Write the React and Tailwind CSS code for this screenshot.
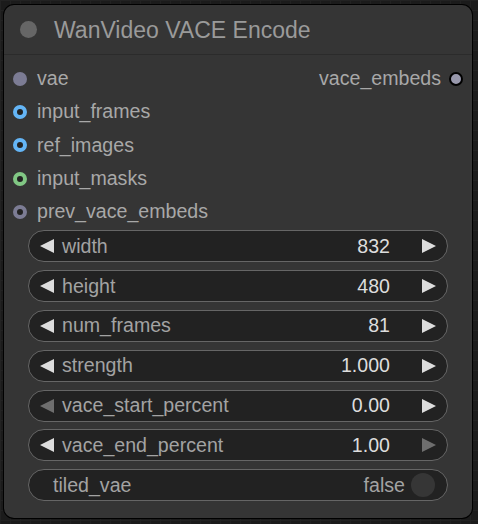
const inputs = [
  { name: "vae", kind: "fill", color: "#7c7c94" },
  { name: "input_frames", kind: "ring", color: "#64b5f6" },
  { name: "ref_images", kind: "ring", color: "#64b5f6" },
  { name: "input_masks", kind: "ring", color: "#81c784" },
  { name: "prev_vace_embeds", kind: "ring", color: "#7c7c94" },
];

const widgets = [
  { name: "width", value: "832" },
  { name: "height", value: "480" },
  { name: "num_frames", value: "81" },
  { name: "strength", value: "1.000" },
  { name: "vace_start_percent", value: "0.00", leftDim: true },
  { name: "vace_end_percent", value: "1.00", rightDim: true },
];

function Dot({ kind, color }) {
  if (kind === "fill") {
    return <span className="block w-[14px] h-[14px] rounded-full" style={{ background: color }} />;
  }
  return (
    <span
      className="block w-[14px] h-[14px] rounded-full border-[4px] bg-[#222]"
      style={{ borderColor: color }}
    />
  );
}

function Arrow({ dir, dim }) {
  const fill = dim ? "#6e6e6e" : "#dddddd";
  return (
    <svg width="16" height="16" viewBox="0 0 16 16" className="shrink-0">
      {dir === "left" ? (
        <polygon points="15,1 15,15 1,8" fill={fill} />
      ) : (
        <polygon points="1,1 1,15 15,8" fill={fill} />
      )}
    </svg>
  );
}

function NumberWidget({ name, value, leftDim, rightDim }) {
  return (
    <div className="h-[32px] rounded-full border border-[#666] bg-[#222] flex items-center pl-[10px] pr-[10px]">
      <Arrow dir="left" dim={leftDim} />
      <span className="ml-[7px] text-[#a3a3a3]">{name}</span>
      <span className="ml-auto text-[#dddddd]">{value}</span>
      <span className="ml-[31px]">
        <Arrow dir="right" dim={rightDim} />
      </span>
    </div>
  );
}

export default function App() {
  return (
    <div
      className="w-[478px] h-[524px] bg-[#1b1b1b] pt-[5px] pl-[4px] overflow-hidden bg-[linear-gradient(#222_1px,transparent_1px),linear-gradient(90deg,#222_1px,transparent_1px)] bg-[size:10px_10px]"
      style={{ fontFamily: '"Liberation Sans", Arial, sans-serif' }}
    >
      <div className="w-[468px] h-[513px] rounded-[10px] bg-[#353535] shadow-[0_0_0_1px_#000] text-[19.6px] overflow-hidden">
        {/* title */}
        <div className="h-[50px] flex items-center border-b border-[#2b2b2b]">
          <span className="ml-[16px] w-[17px] h-[17px] rounded-full bg-[#666]" />
          <span className="ml-[17px] text-[23px] text-[#9a9a9a] pt-[2px]">WanVideo VACE Encode</span>
        </div>

        {/* slots */}
        <div className="pt-[7px] relative">
          {inputs.map((s) => (
            <div key={s.name} className="h-[33.3px] flex items-center pl-[9px] text-[#a8a8a8]">
              <Dot kind={s.kind} color={s.color} />
              <span className="ml-[10px]">{s.name}</span>
            </div>
          ))}
          <div className="absolute top-[7px] right-[9px] h-[33.3px] flex items-center text-[#a8a8a8]">
            <span>vace_embeds</span>
            <span className="ml-[8px] block w-[14px] h-[14px] rounded-full bg-[#9898ac] border-2 border-black" />
          </div>
        </div>

        {/* widgets */}
        <div className="px-[24px] pt-[2px] flex flex-col gap-[7.8px]">
          {widgets.map((w) => (
            <NumberWidget key={w.name} {...w} />
          ))}
          <div className="h-[32px] rounded-full border border-[#666] bg-[#222] flex items-center pl-[24px] pr-[12px]">
            <span className="text-[#a3a3a3]">tiled_vae</span>
            <span className="ml-auto text-[#a3a3a3]">false</span>
            <span className="ml-[6px] w-[24px] h-[24px] rounded-full bg-[#363636]" />
          </div>
        </div>
      </div>
    </div>
  );
}
